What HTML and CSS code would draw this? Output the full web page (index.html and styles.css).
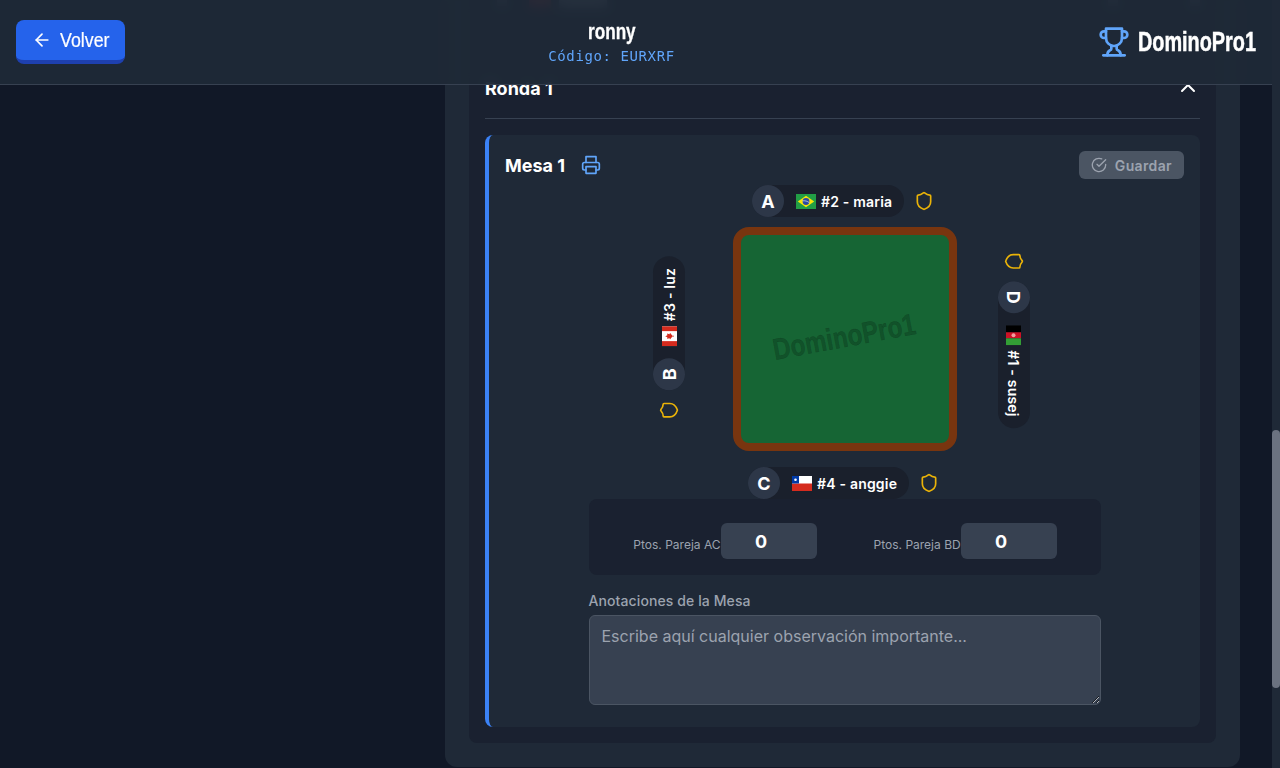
FILE: index.html
```html
<!DOCTYPE html>
<html lang="es">
  <head>
    <meta charset="UTF-8" />
    <meta name="viewport" content="width=device-width, initial-scale=1.0" />
    <title>DominoPro1 - Torneo</title>
    <link rel="stylesheet" href="styles.css">
  </head>
  <body>
    <!-- Barra superior -->
    <header class="topbar">
      <button class="btn-volver" type="button">
        <svg class="icon-20" viewBox="0 0 24 24"><path d="m12 19-7-7 7-7" /><path d="M19 12H5" /></svg>
        <span class="volver-texto">Volver</span>
      </button>
      <div class="torneo">
        <div class="torneo-nombre"><span>ronny</span></div>
        <div class="torneo-codigo">Código: EURXRF</div>
      </div>
      <div class="marca">
        <svg class="icon-trofeo" viewBox="0 0 24 24">
          <path d="M6 9H4.5a2.5 2.5 0 0 1 0-5H6" />
          <path d="M18 9h1.5a2.5 2.5 0 0 0 0-5H18" />
          <path d="M4 22h16" />
          <path d="M10 14.66V17c0 .55-.47.98-.97 1.21C7.85 18.75 7 20.24 7 22" />
          <path d="M14 14.66V17c0 .55.47.98.97 1.21C16.15 18.75 17 20.24 17 22" />
          <path d="M18 2H6v7a6 6 0 0 0 12 0V2Z" />
        </svg>
        <span class="marca-texto">DominoPro1</span>
      </div>
    </header>

    <div class="scrollbar"><div class="scrollbar-thumb"></div></div>

    <div class="pagina">
      <aside class="lateral"></aside>

      <main class="panel">
        <section class="rondas">
          <!-- fila anterior, queda borrosa debajo de la barra -->
          <div class="fila-previa">
            <span class="previa-punto"></span>
            <span class="previa-bandera"></span>
            <span class="previa-barra"></span>
            <span class="previa-punto previa-fin"></span>
            <span class="previa-punto"></span>
          </div>

          <div class="ronda-titulo">
            <span>Ronda 1</span>
            <svg class="icon-24" viewBox="0 0 24 24"><path d="m18 15-6-6-6 6" /></svg>
          </div>

          <article class="mesa">
            <div class="mesa-cabecera">
              <div class="mesa-nombre">
                <h3>Mesa 1</h3>
                <svg class="icon-imprimir" viewBox="0 0 24 24">
                  <polyline points="6 9 6 2 18 2 18 9" />
                  <path d="M6 18H4a2 2 0 0 1-2-2v-5a2 2 0 0 1 2-2h16a2 2 0 0 1 2 2v5a2 2 0 0 1-2 2h-2" />
                  <rect x="6" y="14" width="12" height="8" />
                </svg>
              </div>
              <button class="btn-guardar" type="button" disabled>
                <svg class="icon-16" viewBox="0 0 24 24">
                  <path d="M22 11.08V12a10 10 0 1 1-5.93-9.14" />
                  <polyline points="22 4 12 14.01 9 11.01" />
                </svg>
                Guardar
              </button>
            </div>

            <!-- Mesa de juego con los cuatro asientos -->
            <div class="arena">
              <div class="tablero">
                <span class="marca-agua">DominoPro1</span>
              </div>

              <div class="asiento asiento-a">
                <div class="jugador">
                  <span class="letra">A</span>
                  <svg class="bandera" viewBox="0 0 20 15">
                    <rect width="20" height="15" fill="#229e45" />
                    <polygon points="10,1.8 18.2,7.5 10,13.2 1.8,7.5" fill="#f8e509" />
                    <circle cx="10" cy="7.5" r="3.4" fill="#2b49a3" />
                    <path d="M6.8 6.8c2.2-.3 4.6.3 6.3 1.7" stroke="#fff" stroke-width=".6" fill="none" />
                  </svg>
                  <span class="nombre">#2 - maria</span>
                </div>
                <svg class="escudo" viewBox="0 0 24 24"><path d="M20 13c0 5-3.5 7.5-7.66 8.95a1 1 0 0 1-.67-.01C7.5 20.5 4 18 4 13V6a1 1 0 0 1 1-1c2 0 4.5-1.2 6.24-2.72a1.17 1.17 0 0 1 1.52 0C14.51 3.81 17 5 19 5a1 1 0 0 1 1 1z" /></svg>
              </div>

              <div class="asiento asiento-b">
                <div class="jugador">
                  <span class="letra">B</span>
                  <svg class="bandera" viewBox="0 0 20 15">
                    <rect width="20" height="15" fill="#fff" />
                    <rect width="5" height="15" fill="#d52b1e" />
                    <rect x="15" width="5" height="15" fill="#d52b1e" />
                    <polygon points="10,3.2 11,5.4 12.6,5 12,7.6 13.4,8 10.4,10.4 10.4,12 9.6,12 9.6,10.4 6.6,8 8,7.6 7.4,5 9,5.4" fill="#d52b1e" />
                  </svg>
                  <span class="nombre">#3 - luz</span>
                </div>
                <svg class="escudo" viewBox="0 0 24 24"><path d="M20 13c0 5-3.5 7.5-7.66 8.95a1 1 0 0 1-.67-.01C7.5 20.5 4 18 4 13V6a1 1 0 0 1 1-1c2 0 4.5-1.2 6.24-2.72a1.17 1.17 0 0 1 1.52 0C14.51 3.81 17 5 19 5a1 1 0 0 1 1 1z" /></svg>
              </div>

              <div class="asiento asiento-c">
                <div class="jugador">
                  <span class="letra">C</span>
                  <svg class="bandera" viewBox="0 0 20 15">
                    <rect width="20" height="15" fill="#fff" />
                    <rect y="7.5" width="20" height="7.5" fill="#d52b1e" />
                    <rect width="7" height="7.5" fill="#0039a6" />
                    <circle cx="3.5" cy="3.75" r="1.3" fill="#fff" />
                  </svg>
                  <span class="nombre">#4 - anggie</span>
                </div>
                <svg class="escudo" viewBox="0 0 24 24"><path d="M20 13c0 5-3.5 7.5-7.66 8.95a1 1 0 0 1-.67-.01C7.5 20.5 4 18 4 13V6a1 1 0 0 1 1-1c2 0 4.5-1.2 6.24-2.72a1.17 1.17 0 0 1 1.52 0C14.51 3.81 17 5 19 5a1 1 0 0 1 1 1z" /></svg>
              </div>

              <div class="asiento asiento-d">
                <div class="jugador">
                  <span class="letra">D</span>
                  <svg class="bandera" viewBox="0 0 20 15">
                    <rect width="7" height="15" fill="#000" />
                    <rect x="7" width="6" height="15" fill="#ce1126" />
                    <rect x="13" width="7" height="15" fill="#339e35" />
                    <circle cx="10" cy="7.5" r="2" fill="#f3a0a0" />
                  </svg>
                  <span class="nombre">#1 - susej</span>
                </div>
                <svg class="escudo" viewBox="0 0 24 24"><path d="M20 13c0 5-3.5 7.5-7.66 8.95a1 1 0 0 1-.67-.01C7.5 20.5 4 18 4 13V6a1 1 0 0 1 1-1c2 0 4.5-1.2 6.24-2.72a1.17 1.17 0 0 1 1.52 0C14.51 3.81 17 5 19 5a1 1 0 0 1 1 1z" /></svg>
              </div>
            </div>

            <div class="mesa-datos">
              <div class="puntos">
                <label class="punto-grupo">
                  <span>Ptos. Pareja AC</span>
                  <input type="number" value="0" />
                </label>
                <label class="punto-grupo">
                  <span>Ptos. Pareja BD</span>
                  <input type="number" value="0" />
                </label>
              </div>
              <label class="notas-label" for="notas">Anotaciones de la Mesa</label>
              <textarea id="notas" placeholder="Escribe aquí cualquier observación importante..."></textarea>
            </div>
          </article>
        </section>
      </main>
    </div>
  </body>
</html>
```

FILE: styles.css
```css
* {
  box-sizing: border-box;
}

html,
body {
  height: 100%;
  margin: 0;
  overflow: hidden;
}

body {
  font-family: 'Inter', 'Liberation Sans', sans-serif;
  background: #111827;
  color: #fff;
}

svg {
  fill: none;
  stroke: currentColor;
  stroke-width: 2;
  stroke-linecap: round;
  stroke-linejoin: round;
  flex-shrink: 0;
}

.icon-16 {
  width: 16px;
  height: 16px;
}

.icon-20 {
  width: 20px;
  height: 20px;
}

.icon-24 {
  width: 24px;
  height: 24px;
}

/* Barra superior */
.topbar {
  position: fixed;
  top: 0;
  left: 0;
  right: 8px;
  z-index: 10;
  height: 85px;
  display: flex;
  justify-content: space-between;
  align-items: center;
  padding: 0 16px;
  background: rgba(31, 41, 55, 0.95);
  backdrop-filter: blur(6px);
  border-bottom: 1px solid #374151;
}

.btn-volver {
  display: flex;
  align-items: center;
  gap: 8px;
  width: 109px;
  height: 44px;
  padding: 0 0 0 16px;
  color: #fff;
  font-family: 'Liberation Sans', sans-serif;
  font-size: 20px;
  background: #2563eb;
  border: none;
  border-bottom: 4px solid #1e40af;
  border-radius: 8px;
}

/* La fuente condensada no existe aqui: se angosta con scaleX */
.volver-texto {
  display: inline-block;
  width: 49px;
  -webkit-text-stroke: 0.2px #fff;
  transform: scaleX(0.89);
  transform-origin: left;
}

.torneo {
  text-align: center;
}

.torneo-nombre {
  font-family: 'Liberation Sans', sans-serif;
  font-weight: bold;
  font-size: 22px;
  line-height: 28px;
}

.torneo-nombre span {
  display: inline-block;
  width: 47px;
  text-align: left;
  -webkit-text-stroke: 0.3px #fff;
  transform: scaleX(0.78);
  transform-origin: left;
}

.torneo-codigo {
  font-family: 'DejaVu Sans Mono', monospace;
  font-size: 14px;
  letter-spacing: 0.6px;
  line-height: 20px;
  color: #60a5fa;
}

.marca {
  display: flex;
  align-items: center;
  gap: 8px;
  font-family: 'Liberation Sans', sans-serif;
  font-weight: bold;
  font-size: 27px;
}

.marca-texto {
  display: inline-block;
  width: 118px;
  white-space: nowrap;
  -webkit-text-stroke: 0.5px #fff;
  transform: scaleX(0.735);
  transform-origin: left;
}

.icon-trofeo {
  width: 32px;
  height: 32px;
  color: #60a5fa;
}

/* Cuerpo */
.scrollbar {
  position: fixed;
  top: 0;
  right: 0;
  width: 8px;
  height: 100%;
  background: #1f2937;
}

.scrollbar-thumb {
  position: absolute;
  top: 430px;
  left: 0;
  width: 8px;
  height: 258px;
  background: #6b7280;
  border-radius: 4px;
}

.pagina {
  height: 767px;
  display: grid;
  grid-template-columns: 397px 795px;
  column-gap: 16px;
  align-content: end;
  align-items: end;
  padding-left: 32px;
}

.panel {
  padding: 0 24px 24px;
  background: #1f2937;
  border-radius: 0 0 12px 12px;
}

.rondas {
  padding: 0 16px 16px;
  background: #1a2130;
  border-radius: 0 0 8px 8px;
}

.fila-previa {
  display: flex;
  align-items: flex-start;
  gap: 8px;
  height: 80px;
  padding: 4px 0 0 12px;
}

.previa-punto {
  width: 10px;
  height: 8px;
  background: #6b7280;
}

.previa-fin {
  margin-left: auto;
  margin-right: 64px;
}

.previa-bandera {
  width: 22px;
  height: 10px;
  margin-left: 14px;
  background: #dc2626;
}

.previa-barra {
  width: 48px;
  height: 10px;
  background: #9ca3af;
}

.ronda-titulo {
  display: flex;
  justify-content: space-between;
  align-items: center;
  height: 45px;
  padding-bottom: 16px;
  margin-bottom: 16px;
  font-size: 18px;
  font-weight: 700;
  border-bottom: 1px solid #374151;
}

.mesa {
  padding: 16px 16px 22px;
  background: #1f2937;
  border-left: 4px solid #3b82f6;
  border-radius: 8px;
}

.mesa-cabecera {
  display: flex;
  justify-content: space-between;
  align-items: flex-start;
  height: 35px;
}

.mesa-nombre {
  display: flex;
  align-items: center;
  gap: 16px;
  height: 28px;
}

.mesa-nombre h3 {
  margin: 0;
  font-size: 18px;
  font-weight: 700;
}

.icon-imprimir {
  width: 20px;
  height: 20px;
  color: #60a5fa;
}

.btn-guardar {
  display: flex;
  align-items: center;
  gap: 8px;
  height: 28px;
  padding: 0 12px;
  color: #9ca3af;
  font-family: inherit;
  font-size: 14px;
  font-weight: 600;
  letter-spacing: 0.35px;
  background: #4b5563;
  border: none;
  border-radius: 6px;
}

/* Mesa de juego */
.arena {
  position: relative;
  display: flex;
  justify-content: center;
  height: 313px;
  padding-top: 41px;
}

.tablero {
  display: flex;
  align-items: center;
  justify-content: center;
  width: 224px;
  height: 224px;
  background: #166534;
  border: 8px solid #78350f;
  border-radius: 16px;
}

.marca-agua {
  margin-bottom: 4px;
  font-family: 'Liberation Sans', sans-serif;
  font-weight: bold;
  font-size: 30px;
  color: rgba(0, 0, 0, 0.2);
  -webkit-text-stroke: 0.5px rgba(0, 0, 0, 0.2);
  transform: rotate(-10.5deg) scaleX(0.81);
}

.asiento {
  position: absolute;
  display: flex;
  align-items: center;
  gap: 10px;
  white-space: nowrap;
}

.asiento-a {
  left: 247px;
  top: -1px;
}

.asiento-c {
  left: 243px;
  top: 281px;
}

.asiento-b {
  left: 163.5px;
  top: 152px;
  transform: translate(-50%, -50%) rotate(-90deg);
}

.asiento-d {
  left: 509px;
  top: 154px;
  transform: translate(-50%, -50%) rotate(90deg);
}

.asiento-b .escudo,
.asiento-d .escudo {
  order: -1;
}

.jugador {
  display: flex;
  align-items: center;
  height: 32px;
  padding-right: 12px;
  background: #1a202c;
  border-radius: 16px;
  font-size: 14px;
  font-weight: 600;
  letter-spacing: 0.2px;
}

.letra {
  display: flex;
  align-items: center;
  justify-content: center;
  width: 32px;
  height: 32px;
  margin-right: 12px;
  background: #2d3748;
  border-radius: 50%;
  font-size: 18px;
  font-weight: 700;
}

.bandera {
  width: 20px;
  height: 15px;
  margin-right: 5px;
  stroke: none;
}

.escudo {
  width: 20px;
  height: 20px;
  color: #eab308;
}

/* Puntos y notas */
.mesa-datos {
  width: 512px;
  margin: 0 auto;
}

.puntos {
  display: flex;
  justify-content: center;
  gap: 57px;
  height: 76px;
  padding: 24px 0 0 1px;
  background: #1a2130;
  border-radius: 8px;
}

.punto-grupo {
  display: flex;
  align-items: center;
  height: 36px;
  font-size: 12px;
  color: #9ca3af;
}

.punto-grupo span {
  padding-top: 6px;
}

.punto-grupo input {
  width: 96px;
  height: 36px;
  padding: 0;
  color: #fff;
  font-family: inherit;
  font-size: 18px;
  font-weight: 700;
  text-align: center;
  background: #374151;
  border: none;
  border-radius: 6px;
  appearance: textfield;
}

.notas-label {
  display: block;
  margin: 18px 0 6px;
  font-size: 14px;
  font-weight: 500;
  letter-spacing: 0.1px;
  line-height: 16px;
  color: #9ca3af;
}

textarea {
  display: block;
  width: 100%;
  height: 90px;
  padding: 8px 12px;
  color: #fff;
  font-family: inherit;
  font-size: 16px;
  line-height: 24px;
  background: #374151;
  border: 1px solid #4b5563;
  border-radius: 6px;
}

textarea::placeholder {
  color: #9ca3af;
}
```
